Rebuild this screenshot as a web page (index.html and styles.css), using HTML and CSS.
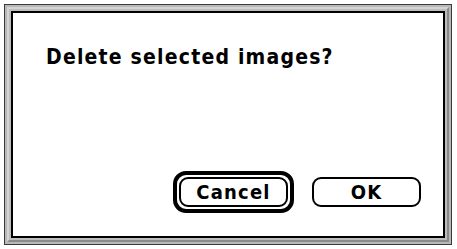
FILE: index.html
```html
<!DOCTYPE html>
<html>
<head>
<meta charset="utf-8">
<link rel="stylesheet" href="styles.css">
</head>
<body>
<div class="screen">
  <div class="frame">
    <div class="band">
      <div class="dialog">
        <p class="message">Delete selected images?</p>
        <div class="buttons">
          <div class="default-ring"><button class="btn">Cancel</button></div>
          <button class="btn">OK</button>
        </div>
      </div>
    </div>
  </div>
</div>
</body>
</html>
```
FILE: styles.css
```css
html, body {
  margin: 0;
  padding: 0;
  background: #fff;
}
.screen {
  width: 457px;
  height: 249px;
  padding: 4px 5px 4px 4px;
  box-sizing: border-box;
}
.frame {
  height: 100%;
  box-sizing: border-box;
  border: 1px solid #3a3a3a;
  background: #b8b8b8;
  padding: 2px;
}
.band {
  height: 100%;
  box-sizing: border-box;
  border: 2px solid #d4d4d4;
  border-right-color: #8a8a8a;
  border-bottom-color: #8a8a8a;
  padding: 2px;
  background: #bdbdbd;
}
.dialog {
  height: 100%;
  box-sizing: border-box;
  border: 2px solid #000;
  background: #fff;
  display: flex;
  flex-direction: column;
  padding: 0 22px 23px 33px;
}
.message {
  margin: 32px 0 0 0;
  font-family: "DejaVu Sans Condensed", "DejaVu Sans", sans-serif;
  font-weight: bold;
  font-size: 21px;
  letter-spacing: 1.2px;
  line-height: 25px;
  color: #000;
}
.buttons {
  margin-top: auto;
  display: flex;
  justify-content: flex-end;
  align-items: center;
  gap: 18px;
}
.default-ring {
  border: 4px solid #000;
  border-radius: 13px;
  padding: 2px;
  display: flex;
}
.btn {
  width: 109px;
  height: 30px;
  box-sizing: border-box;
  border: 2px solid #000;
  border-radius: 9px;
  background: #fff;
  font-family: "DejaVu Sans Condensed", "DejaVu Sans", sans-serif;
  font-weight: bold;
  font-size: 20px;
  letter-spacing: 1.2px;
  color: #000;
  padding: 0;
  margin: 0;
}
```
